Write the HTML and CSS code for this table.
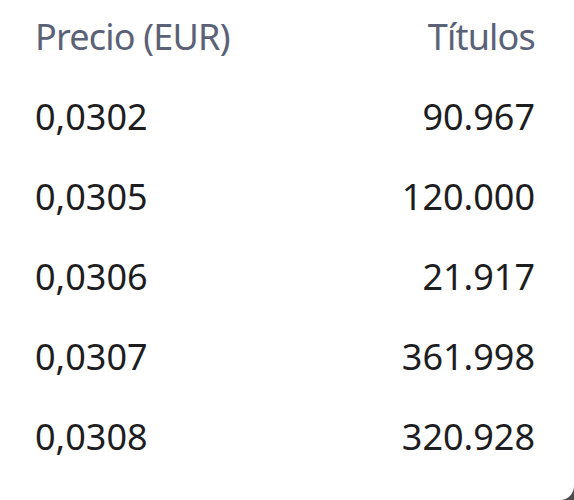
FILE: index.html
```html
<!DOCTYPE html>
<html lang="es">
<head>
  <meta charset="UTF-8" />
  <meta name="viewport" content="width=device-width, initial-scale=1.0"/>
  <title>Libro de órdenes</title>
  <link rel="stylesheet" href="styles.css">
</head>
<body>
<div class="card">
  <div class="row head">
    <span>Precio (EUR)</span>
    <span>Títulos</span>
  </div>
  <div class="row"><span>0,0302</span><span>90.967</span></div>
  <div class="row"><span>0,0305</span><span>120.000</span></div>
  <div class="row"><span>0,0306</span><span>21.917</span></div>
  <div class="row"><span>0,0307</span><span>361.998</span></div>
  <div class="row"><span>0,0308</span><span>320.928</span></div>
</div>
</body>
</html>
```

FILE: styles.css
```css
body { margin: 0; background: #4d4d4f; font-family: "Noto Sans", sans-serif; }
.card { height: 500px; background: #fff; border-bottom-right-radius: 14px; padding: 12px 39px 0 35px; box-sizing: border-box; display: flex; flex-direction: column; gap: 31px; }
.row { display: flex; justify-content: space-between; font-size: 36px; line-height: 49px; color: #1d1d1f; }
.head { color: #5b6177; letter-spacing: -0.8px; }
```
